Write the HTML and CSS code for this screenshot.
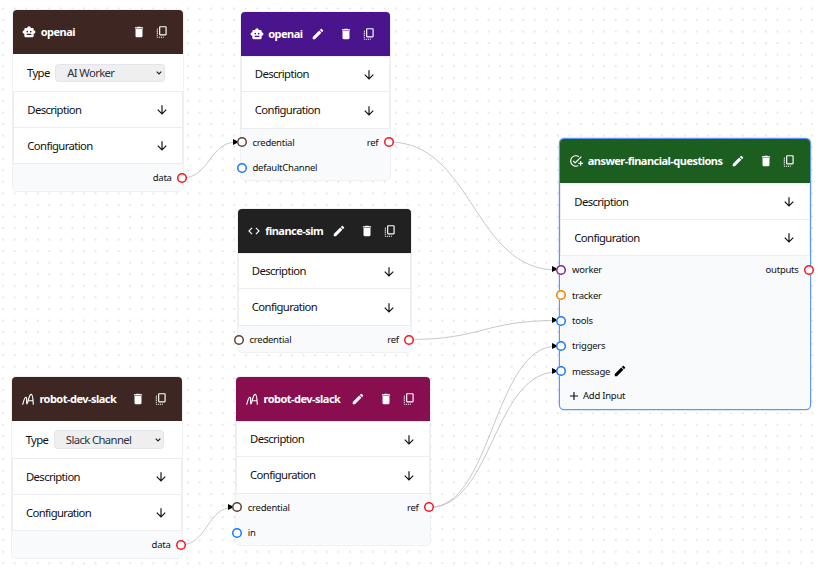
FILE: index.html
```
<!DOCTYPE html>
<html lang="en">
<head>
<meta charset="utf-8">
<title>Flow</title>
<link rel="stylesheet" href="styles.css">
</head>
<body>
<svg class="defs" width="0" height="0">
  <symbol id="robot" viewBox="0 0 24 24"><path d="M20 9V7c0-1.1-.9-2-2-2h-3c0-1.66-1.34-3-3-3S9 3.34 9 5H6c-1.1 0-2 .9-2 2v2c-1.66 0-3 1.34-3 3s1.34 3 3 3v4c0 1.1.9 2 2 2h12c1.1 0 2-.9 2-2v-4c1.66 0 3-1.34 3-3s-1.34-3-3-3zM7.5 11.5c0-.83.67-1.5 1.5-1.5s1.5.67 1.5 1.5S9.83 13 9 13s-1.5-.67-1.5-1.5zM16 17H8v-2h8v2zm-1-4c-.83 0-1.5-.67-1.5-1.5S14.17 10 15 10s1.5.67 1.5 1.5S15.83 13 15 13z"/></symbol>
  <symbol id="trash" viewBox="0 0 24 24"><path d="M6 19c0 1.1.9 2 2 2h8c1.1 0 2-.9 2-2V7H6v12zM19 4h-3.5l-1-1h-5l-1 1H5v2h14V4z"/></symbol>
  <symbol id="pencil" viewBox="0 0 24 24"><path d="M3 17.25V21h3.75L17.81 9.94l-3.75-3.75L3 17.25zM20.71 7.04c.39-.39.39-1.02 0-1.41l-2.34-2.34c-.39-.39-1.02-.39-1.41 0l-1.83 1.83 3.75 3.75 1.83-1.83z"/></symbol>
  <symbol id="copy" viewBox="0 0 24 24"><path d="M18 2H9C7.9 2 7 2.9 7 4v12c0 1.1.9 2 2 2h9c1.1 0 2-.9 2-2V4C20 2.9 19.1 2 18 2zM18 16H9V4h9V16zM3 15v-2h2v2H3zM3 9.5h2v2H3V9.5zM10 20h2v2h-2V20zM3 18.5v-2h2v2H3zM5 22c-1.1 0-2-.9-2-2h2V22zM8.5 22h-2v-2h2V22zM13.5 22v-2h2C15.5 21.1 14.6 22 13.5 22zM5 6v2H3C3 6.9 3.9 6 5 6z"/></symbol>
  <symbol id="code" viewBox="0 0 24 24"><path d="M9.4 16.6 4.8 12l4.6-4.6L8 6l-6 6 6 6 1.4-1.4zm5.2 0 4.6-4.6-4.6-4.6L16 6l6 6-6 6-1.4-1.4z"/></symbol>
  <symbol id="task" viewBox="0 0 24 24"><path d="M22 5.18 10.59 16.6l-4.24-4.24 1.41-1.41 2.83 2.83 10-10L22 5.18zM12 20c-4.41 0-8-3.59-8-8s3.59-8 8-8c1.57 0 3.04.46 4.28 1.25l1.45-1.45C16.1 2.67 14.13 2 12 2 6.48 2 2 6.48 2 12s4.48 10 10 10c1.73 0 3.36-.44 4.78-1.22l-1.5-1.5c-1 .46-2.11.72-3.28.72zm7-5h-3v2h3v3h2v-3h3v-2h-3v-3h-2v3z"/></symbol>
  <symbol id="squiggle" viewBox="0 0 24 24"><path fill="none" stroke="currentColor" stroke-width="2" stroke-linecap="round" stroke-linejoin="round" d="M3 21C4.500 17 5.500 9 8.500 9c2.500 0 0 11 1.500 11.500C13 18 13 4 17.500 4 20.500 4 20.500 13 21 21M13 15h7.500"/></symbol>
  <symbol id="down" viewBox="0 0 24 24"><path d="M20 12l-1.41-1.41L13 16.17V4h-2v12.17l-5.58-5.59L4 12l8 8 8-8z"/></symbol>
  <symbol id="plus" viewBox="0 0 24 24"><path d="M19 13h-6v6h-2v-6H5v-2h6V5h2v6h6v2z"/></symbol>
</svg>

<main class="canvas">
  <svg class="edges" width="823" height="568">
    <defs>
      <pattern id="dots" width="11.56" height="11.56" patternUnits="userSpaceOnUse" x="-2.7" y="2.6"><circle cx="5.78" cy="5.78" r=".6"/></pattern>
    </defs>
    <rect class="dots" width="823" height="568" fill="url(#dots)"/>
    <path class="edge" d="M182 178C210 178 209 142 237 142"/>
    <path class="edge" d="M389 142C473 142 473 270 557 270"/>
    <path class="edge" d="M409 339.500C483 339.500 483 320.500 557 320.500"/>
    <path class="edge" d="M429 507.500C493 507.500 493 346 557 346"/>
    <path class="edge" d="M429 507.500C493 507.500 493 372 557 372"/>
    <path class="edge" d="M181 545C207 545 207 507.500 233 507.500"/>
  </svg>

  <section class="node n1">
    <header class="head brown"><svg class="icon"><use href="#robot"/></svg><h2 class="title">openai</h2><span class="tools"><svg class="icon"><use href="#trash"/></svg><svg class="icon"><use href="#copy"/></svg></span></header>
    <div class="type"><span>Type</span><div class="select"><span>AI Worker</span><svg class="caret" viewBox="0 0 6 4"><path d="M.7.7 3 3 5.300.7"/></svg></div></div>
    <div class="row">Description<svg class="icon"><use href="#down"/></svg></div>
    <div class="row">Configuration<svg class="icon"><use href="#down"/></svg></div>
    <div class="ports"><div class="port"><span class="out">data</span><i class="dot right red"></i></div></div>
  </section>

  <section class="node n2">
    <header class="head purple"><svg class="icon"><use href="#robot"/></svg><h2 class="title">openai</h2><span class="tools"><svg class="icon edit"><use href="#pencil"/></svg><svg class="icon"><use href="#trash"/></svg><svg class="icon"><use href="#copy"/></svg></span></header>
    <div class="row">Description<svg class="icon"><use href="#down"/></svg></div>
    <div class="row">Configuration<svg class="icon"><use href="#down"/></svg></div>
    <div class="ports">
      <div class="port"><i class="tip"></i><i class="dot left umber"></i><span>credential</span><span class="out">ref</span><i class="dot right red"></i></div>
      <div class="port"><i class="dot left blue"></i><span>defaultChannel</span></div>
    </div>
  </section>

  <section class="node n3">
    <header class="head black"><svg class="icon"><use href="#code"/></svg><h2 class="title">finance-sim</h2><span class="tools"><svg class="icon edit"><use href="#pencil"/></svg><svg class="icon"><use href="#trash"/></svg><svg class="icon"><use href="#copy"/></svg></span></header>
    <div class="row">Description<svg class="icon"><use href="#down"/></svg></div>
    <div class="row">Configuration<svg class="icon"><use href="#down"/></svg></div>
    <div class="ports"><div class="port"><i class="dot left umber"></i><span>credential</span><span class="out">ref</span><i class="dot right red"></i></div></div>
  </section>

  <section class="node n4">
    <header class="head brown"><svg class="icon"><use href="#squiggle"/></svg><h2 class="title">robot-dev-slack</h2><span class="tools"><svg class="icon"><use href="#trash"/></svg><svg class="icon"><use href="#copy"/></svg></span></header>
    <div class="type"><span>Type</span><div class="select"><span>Slack Channel</span><svg class="caret" viewBox="0 0 6 4"><path d="M.7.7 3 3 5.300.7"/></svg></div></div>
    <div class="row">Description<svg class="icon"><use href="#down"/></svg></div>
    <div class="row">Configuration<svg class="icon"><use href="#down"/></svg></div>
    <div class="ports"><div class="port"><span class="out">data</span><i class="dot right red"></i></div></div>
  </section>

  <section class="node n5">
    <header class="head wine"><svg class="icon"><use href="#squiggle"/></svg><h2 class="title">robot-dev-slack</h2><span class="tools"><svg class="icon edit"><use href="#pencil"/></svg><svg class="icon"><use href="#trash"/></svg><svg class="icon"><use href="#copy"/></svg></span></header>
    <div class="row">Description<svg class="icon"><use href="#down"/></svg></div>
    <div class="row">Configuration<svg class="icon"><use href="#down"/></svg></div>
    <div class="ports">
      <div class="port"><i class="tip"></i><i class="dot left umber"></i><span>credential</span><span class="out">ref</span><i class="dot right red"></i></div>
      <div class="port"><i class="dot left blue"></i><span>in</span></div>
    </div>
  </section>

  <section class="node n6 selected">
    <header class="head green"><svg class="icon"><use href="#task"/></svg><h2 class="title">answer-financial-questions</h2><span class="tools"><svg class="icon edit"><use href="#pencil"/></svg><svg class="icon"><use href="#trash"/></svg><svg class="icon"><use href="#copy"/></svg></span></header>
    <div class="row">Description<svg class="icon"><use href="#down"/></svg></div>
    <div class="row">Configuration<svg class="icon"><use href="#down"/></svg></div>
    <div class="ports">
      <div class="port"><i class="tip"></i><i class="dot left violet"></i><span>worker</span><span class="out">outputs</span><i class="dot right red"></i></div>
      <div class="port"><i class="dot left orange"></i><span>tracker</span></div>
      <div class="port"><i class="tip"></i><i class="dot left blue"></i><span>tools</span></div>
      <div class="port"><i class="tip"></i><i class="dot left blue"></i><span>triggers</span></div>
      <div class="port"><i class="tip"></i><i class="dot left blue"></i><span>message</span><svg class="icon pen"><use href="#pencil"/></svg></div>
      <div class="add"><svg class="icon"><use href="#plus"/></svg><span>Add Input</span></div>
    </div>
  </section>
</main>
</body>
</html>
```
FILE: styles.css
```
* { box-sizing: border-box; }

body {
  margin: 0;
  background: #fff;
  color: #111;
  font: 11.3px/1 "Noto Sans", sans-serif;
  letter-spacing: -.62px;
  overflow: hidden;
}

.defs { position: absolute; }
.canvas { position: relative; width: 823px; height: 568px; overflow: hidden; }
.edges { position: absolute; inset: 0; }
.dots { opacity: .4; }
.edge { fill: none; stroke: #c2c2c6; stroke-width: .9; }

/* Nodes are placed freely on the canvas */
.node {
  position: absolute;
  border-radius: 4px;
  background: #f8fafc;
  box-shadow: 0 0 0 1px #eff1f5;
}
.n1 { left: 13px; top: 10.300px; width: 170.400px; }
.n2 { left: 240.500px; top: 11.500px; width: 149.500px; }
.n3 { left: 237.500px; top: 208.700px; width: 173px; }
.n4 { left: 11.700px; top: 377px; width: 170.500px; }
.n5 { left: 235.800px; top: 376.500px; width: 194.500px; }
.n6 { left: 560px; top: 139px; width: 250.300px; }
.selected { box-shadow: 0 0 0 1.200px #5b97f5; }

.icon { width: 14px; height: 14px; fill: currentColor; flex: none; display: block; }

.head {
  display: flex;
  align-items: center;
  height: 44.200px;
  padding: 0 14px 0 9.200px;
  border-radius: 4px 4px 0 0;
  color: #fff;
}
.title { margin: 0 0 0 4.500px; font-size: 11px; font-weight: 700; letter-spacing: -.52px; white-space: nowrap; position: relative; top: -.5px; }
.tools { display: flex; gap: 9px; margin-left: auto; }
.edit { margin-right: 5px; }
.brown { background: #3e2723; }
.purple { background: #4a148c; }
.black { background: #212121; }
.wine { background: #880e4f; }
.green { background: #1b5e20; }

.type {
  display: flex;
  align-items: center;
  gap: 5.500px;
  height: 37px;
  padding: 0 18.500px 0 14px;
  background: #fff;
}
.select {
  display: flex;
  align-items: center;
  justify-content: space-between;
  flex: 1;
  height: 18.500px;
  padding: 0 2px 0 11px;
  border: 1px solid #e2e5ea;
  border-radius: 3.500px;
  background: #efefef;
  color: #2d3340;
}
.caret { width: 6px; height: 4px; fill: none; stroke: #222; stroke-width: 1.200; }

.row {
  display: flex;
  align-items: center;
  justify-content: space-between;
  height: 36.500px;
  padding: 0 13.500px 0 13.300px;
  border: solid #ebedf1;
  border-width: 1px;
  background: #fff;
}
.row + .row { border-top: 0; }
.row .icon { position: relative; top: .7px; }

.ports { padding-top: 1px; font-size: 9.500px; letter-spacing: -.25px; }
.port { position: relative; display: flex; align-items: center; height: 25.400px; padding: 0 11.700px 0 12px; }
.out { margin-left: auto; }
.dot {
  position: absolute;
  top: 7.700px;
  width: 10px;
  height: 10px;
  box-shadow: inset 0 0 0 1.500px currentColor;
  border-radius: 50%;
  background: #fff;
}
.left { left: -3.800px; }
.right { right: -3.800px; }
.tip {
  position: absolute;
  left: -8px;
  top: 9.200px;
  border-left: 6px solid #000;
  border-top: 3.500px solid transparent;
  border-bottom: 3.500px solid transparent;
}
.red { color: #f8141a; }
.blue { color: #1677ff; }
.umber { color: #5d4037; }
.violet { color: #7b1fa2; }
.orange { color: #f57c00; }
.pen { width: 14px; height: 14px; margin-left: 2.500px; color: #000; }
.add { display: flex; align-items: center; gap: 2px; height: 24px; padding: 0 7px; }
.add + .port, .ports:has(.add) { padding-bottom: 1px; }
```
